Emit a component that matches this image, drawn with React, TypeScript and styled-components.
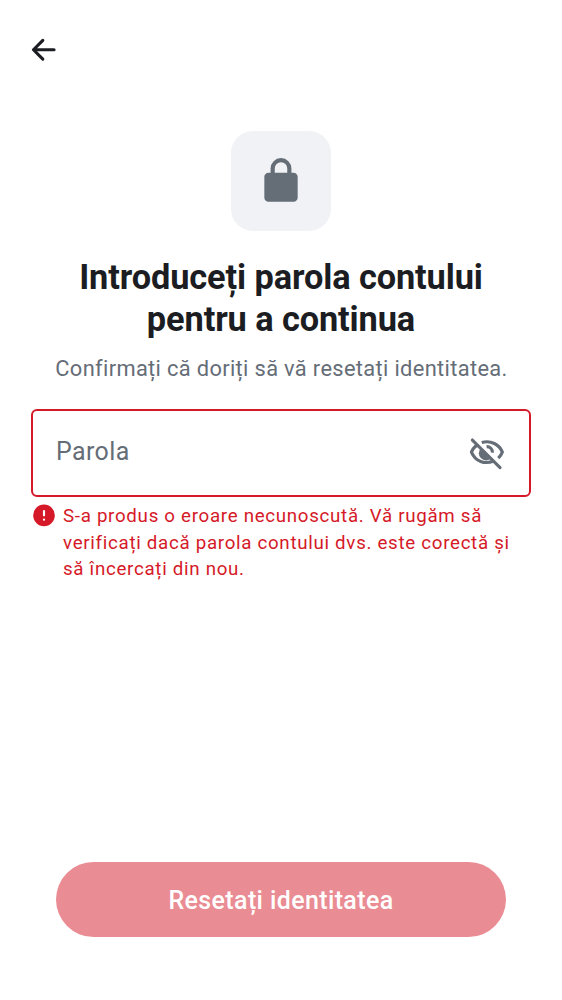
import React from 'react';
import styled, { createGlobalStyle } from 'styled-components';

const GlobalStyle = createGlobalStyle`
  * { box-sizing: border-box; }
  body { margin: 0; background: #fff; font-family: Roboto, "Noto Sans", sans-serif; }
`;

const Screen = styled.main`
  display: flex;
  flex-direction: column;
  width: 562px;
  height: 1000px;
  padding: 31px 31px 62.6px;
  background: #fff;
`;

const IconButton = styled.button`
  display: flex;
  padding: 0;
  border: 0;
  background: none;
  color: ${(p) => p.color};
`;

const Header = styled.header`
  display: flex;
  height: 100px;
  margin-left: -6px;
  align-items: flex-start;
`;

const Intro = styled.section`
  display: flex;
  flex-direction: column;
  align-items: center;
  text-align: center;
`;

const IconTile = styled.div`
  display: grid;
  place-items: center;
  width: 100px;
  height: 100px;
  border-radius: 22px;
  background: #f0f2f5;
  color: #656d77;
`;

const Title = styled.h1`
  margin: 25px 0 0;
  font-size: 34.34px;
  line-height: 42.4px;
  font-weight: 700;
  letter-spacing: -0.1px;
  color: #1b1d22;
`;

const Subtitle = styled.p`
  margin: 12.6px 0 0;
  padding-left: 1px;
  font-size: 21.85px;
  line-height: 31px;
  letter-spacing: 0.34px;
  color: #656d77;
  white-space: nowrap;
`;

const Field = styled.div`
  display: flex;
  align-items: center;
  justify-content: space-between;
  height: 88px;
  margin-top: 25px;
  padding: 0 23.5px 3px 23px;
  border: 2px solid #d51928;
  border-radius: 6px;
`;

const Placeholder = styled.span`
  font-size: 24.98px;
  line-height: 37px;
  letter-spacing: 0.39px;
  color: #656d77;
`;

const ErrorRow = styled.div`
  display: flex;
  gap: 6.5px;
  margin: 5.5px 0 0 -0.5px;
  color: #d51928;
`;

const ErrorText = styled.p`
  margin: 0.4px 0 0;
  font-size: 18.73px;
  line-height: 26.5px;
  letter-spacing: 0.7px;
`;

const ErrorIcon = styled.svg`
  flex: none;
  margin-top: -0.5px;
`;

const PrimaryButton = styled.button`
  height: 75px;
  margin: auto 25px 0;
  padding: 1px 0 0;
  border: 0;
  border-radius: 38px;
  background: #ea8c93;
  color: #fff;
  font: 500 24.98px/37px Roboto, sans-serif;
  letter-spacing: 0.39px;
`;

export default function App() {
  return (
    <>
      <GlobalStyle />
      <Screen>
        <Header>
          <IconButton color="#1b1d22" aria-label="Înapoi">
            <svg width="37.5" height="37.5" viewBox="0 0 24 24" fill="none" stroke="currentColor" strokeWidth="2" strokeLinecap="round" strokeLinejoin="round">
              <path d="M18.6 12H5.5M11.4 6 5.4 12l6 6" />
            </svg>
          </IconButton>
        </Header>
        <Intro>
          <IconTile>
            <svg width="50" height="50" viewBox="0 0 24 24" fill="currentColor">
              <path d="M6 22q-.825 0-1.412-.587A1.93 1.93 0 0 1 4 20V10q0-.825.588-1.412A1.93 1.93 0 0 1 6 8h1V6q0-2.075 1.463-3.537Q9.925 1 12 1t3.537 1.463T17 6v2h1q.825 0 1.413.588Q20 9.175 20 10v10q0 .825-.587 1.413A1.93 1.93 0 0 1 18 22zM9 8h6V6q0-1.25-.875-2.125A2.9 2.9 0 0 0 12 3q-1.25 0-2.125.875A2.9 2.9 0 0 0 9 6z" />
            </svg>
          </IconTile>
          <Title>Introduceți parola contului<br />pentru a continua</Title>
          <Subtitle>Confirmați că doriți să vă resetați identitatea.</Subtitle>
        </Intro>
        <Field>
          <Placeholder>Parola</Placeholder>
          <IconButton color="#656d77" aria-label="Afișați parola">
            <svg width="37.5" height="37.5" viewBox="0 0 24 24" fill="none" stroke="currentColor" strokeWidth="2">
              <path d="M8.8 6.1C14.7 4.5 20 7.300 22 12.200C21.500 13.700 20.600 15 19.400 16.100M6.200 7.400C4.300 8.600 2.900 10.200 2.200 12.200C4.700 18.200 10.700 20.300 16.500 17.900" />
              <path d="M11.9 8.700A3.500 3.500 0 0 1 15.600 12.500" />
              <path d="M8.3 9.600 14.900 16.200A4.500 4.500 0 0 1 8.300 9.600z" fill="currentColor" stroke="none" />
              <path d="m2.8 4.500 17.700 17.600" strokeLinecap="round" />
            </svg>
          </IconButton>
        </Field>
        <ErrorRow>
          <ErrorIcon width="26" height="26" viewBox="0 0 24 24" fill="currentColor">
            <path fillRule="evenodd" d="M12 2.300a10 10 0 1 1 0 20 10 10 0 0 1 0-20m0 5a1 1 0 0 0-1 1v4a1 1 0 1 0 2 0V8.300a1 1 0 0 0-1-1m0 8a1 1 0 1 0 0 2 1 1 0 0 0 0-2" />
          </ErrorIcon>
          <ErrorText>
            S-a produs o eroare necunoscută. Vă rugăm să<br />
            verificați dacă parola contului dvs. este corectă și<br />
            să încercați din nou.
          </ErrorText>
        </ErrorRow>
        <PrimaryButton>Resetați identitatea</PrimaryButton>
      </Screen>
    </>
  );
}
